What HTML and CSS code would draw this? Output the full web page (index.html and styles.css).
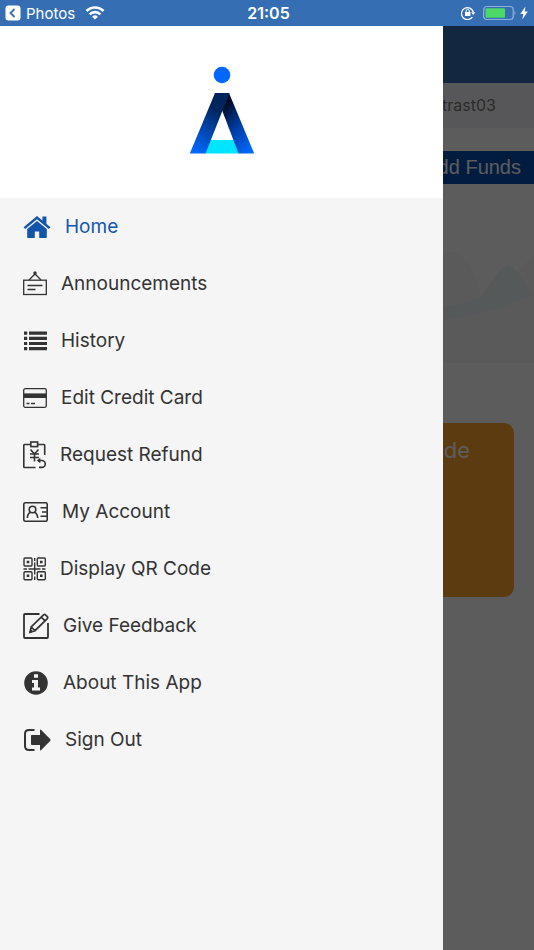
FILE: index.html
```html
<!DOCTYPE html>
<html lang="en">
<head>
    <meta charset="UTF-8">
    <meta name="viewport" content="width=device-width, initial-scale=1.0">
    <title>Home</title>
    <link rel="stylesheet" href="styles.css">
</head>
<body>
    <header class="status-bar">
        <div class="status-left">
            <a class="back-link" href="#">
                <svg width="16" height="16" viewBox="0 0 16 16"><rect x="0.5" y="0.5" width="15" height="15" rx="3" fill="#fff"/><path d="M9.500 4L5.500 8l4 4" fill="none" stroke="#366eb4" stroke-width="1.800"/></svg>
                Photos
            </a>
            <svg width="20" height="14" viewBox="0 0 20 14" fill="none" stroke="#fff" stroke-width="2.600">
                <path d="M1.500 5a12 12 0 0 1 17 0"/>
                <path d="M4.600 8.400a7.600 7.600 0 0 1 10.800 0"/>
                <path d="M10 13.600L7.100 10.800a4.100 4.100 0 0 1 5.800 0z" fill="#fff" stroke="none"/>
            </svg>
        </div>
        <div class="status-time">21:05</div>
        <div class="status-right">
            <svg width="16" height="14" viewBox="0 0 16 14" fill="none" stroke="#fff">
                <path d="M11.300 11.200A6 6 0 1 1 12.300 6" stroke-width="1.300"/>
                <path d="M10 6.200h4.400L12.200 9z" fill="#fff" stroke="none"/>
                <rect x="4" y="6" width="5.400" height="4" fill="#fff" stroke="none"/>
                <path d="M5.100 6.500V5a1.600 1.600 0 0 1 3.200 0v1.500"/>
            </svg>
            <svg width="34" height="16" viewBox="0 0 34 16">
                <rect x="0.700" y="1.500" width="29.500" height="13" rx="3" fill="none" stroke="#8fb0dc" stroke-width="1.200"/>
                <rect x="2.500" y="3.300" width="19.500" height="9.400" rx="1" fill="#4cd964"/>
                <path d="M31.500 5.500q2 2.500 0 5z" fill="#8fb0dc"/>
            </svg>
            <svg width="8" height="14" viewBox="0 0 8 14"><path d="M5.500 0.500L0.300 8h3L2.300 13.500 7.800 5.600H4.600z" fill="#fff"/></svg>
        </div>
    </header>

    <div class="screen">
        <main class="page">
            <div class="page-header"></div>
            <div class="user-row">contrast03</div>
            <button class="add-funds" type="button">Add Funds</button>
            <div class="waves">
                <svg width="100%" height="110" viewBox="0 0 534 110" preserveAspectRatio="xMaxYMid slice">
                    <path d="M0 60C150 60 300 60 420 15C445-3 462-5 475 25C480 40 483 47 486 51C500 36 515 24 534 4V110H0z" fill="#f8fafc"/>
                    <path d="M380 58C440 60 465 55 482 46C492 32 500 15 509 16C518 17 526 36 534 46V44C510 56 460 72 380 78z" fill="#ebf5f5"/>
                </svg>
            </div>
            <div class="code-card">Display QR Code</div>
        </main>
        <div class="backdrop"></div>

        <aside class="drawer">
            <div class="logo">
                <svg width="66" height="88" viewBox="0 0 66 88">
                    <defs>
                        <linearGradient id="leftLeg" x1="0.600" y1="0" x2="0.200" y2="1"><stop offset="0.200" stop-color="#00245c"/><stop offset="1" stop-color="#0068ff"/></linearGradient>
                        <linearGradient id="rightLeg" x1="0.200" y1="0" x2="0.800" y2="1"><stop offset="0.100" stop-color="#000a24"/><stop offset="0.500" stop-color="#003a9c"/><stop offset="1" stop-color="#0068ff"/></linearGradient>
                    </defs>
                    <circle cx="33" cy="9" r="8.300" fill="#0068ff"/>
                    <path d="M21 74h24l5 13.500H16z" fill="#00e5ff"/>
                    <path d="M40 27L65.200 87.500H49.500L33 44z" fill="url(#rightLeg)"/>
                    <path d="M26 27h14.500L16.500 87.500H0.800z" fill="url(#leftLeg)"/>
                </svg>
            </div>
            <nav class="menu">
                <a class="menu-item active" href="#">
                    <svg width="28" height="24" viewBox="0 0 28 24" fill="currentColor">
                        <path d="M14 1L0.600 12.200l1.600 1.800L14 4.300 25.800 14l1.600-1.800-4-3.400V1.600h-4v3.900z"/>
                        <path d="M14 6L4.200 14v8.200q0 .8.800.8h6.800v-6.500h4.400V23H23q.8 0 .8-.8V14z"/>
                    </svg>
                    Home
                </a>
                <a class="menu-item" href="#">
                    <svg width="24" height="26" viewBox="0 0 24 26" fill="none" stroke="currentColor" stroke-width="1.300">
                        <rect x="0.700" y="9.200" width="22.600" height="14.300"/>
                        <path d="M6 9l5.500-5.500h1L18 9M4.500 14.500h15M4.500 18.500h8"/>
                        <circle cx="12" cy="2" r="1.700" fill="currentColor" stroke="none"/>
                    </svg>
                    Announcements
                </a>
                <a class="menu-item" href="#">
                    <svg width="24" height="20" viewBox="0 0 24 20" fill="currentColor">
                        <path d="M1 0.500h3.200v3.200H1zM6 0.500h18v3.200H6zM1 5.700h3.200v3.200H1zM6 5.700h18v3.200H6zM1 10.900h3.200v3.200H1zM6 10.900h18v3.200H6zM1 16.100h3.200v3.200H1zM6 16.100h18v3.200H6z"/>
                    </svg>
                    History
                </a>
                <a class="menu-item" href="#">
                    <svg width="24" height="20" viewBox="0 0 24 20" fill="none" stroke="currentColor" stroke-width="1.300">
                        <rect x="0.700" y="0.700" width="22.600" height="18.600" rx="1.500"/>
                        <path d="M1 7.700h22" stroke-width="4.600"/>
                        <path d="M3.500 15.500h3M8 15.500h4"/>
                    </svg>
                    Edit Credit Card
                </a>
                <a class="menu-item" href="#">
                    <svg width="23" height="28" viewBox="0 0 23 28" fill="none" stroke="currentColor" stroke-width="1.600">
                        <path d="M7.500 3.500H1.500q-.7 0-.7.7v21.600q0 .7.700.7h11M15 3.500h6q.7 0 .7.700V14"/>
                        <rect x="7.800" y="1" width="6.800" height="4.600"/>
                        <path d="M7.500 8.500l4 4.500 4-4.500M11.500 13v7.500M7 13h9M7 16.500h9"/>
                        <path d="M15.500 19.500h3.300a3.400 3.400 0 0 1 0 6.900H16"/>
                        <path d="M17.300 16.700v5.600L13.700 19.500z" fill="currentColor" stroke="none"/>
                    </svg>
                    Request Refund
                </a>
                <a class="menu-item" href="#">
                    <svg width="25" height="20" viewBox="0 0 25 20" fill="none" stroke="currentColor" stroke-width="1.600">
                        <rect x="0.800" y="0.800" width="23.400" height="18.400" rx="1.500"/>
                        <circle cx="9.500" cy="7.500" r="3.300"/>
                        <path d="M4.300 16q.3-4.500 3.200-5.700M14.700 16q-.3-4.500-3.200-5.700M17.500 5.700H24M19 10h5M17.500 14.300H24"/>
                    </svg>
                    My Account
                </a>
                <a class="menu-item" href="#">
                    <svg width="23" height="24" viewBox="0 0 23 24" fill="none" stroke="currentColor" stroke-width="1.400">
                        <rect x="1" y="1" width="8" height="8" rx="1"/>
                        <rect x="14.300" y="1" width="8" height="8" rx="1"/>
                        <rect x="1" y="14.800" width="8" height="8" rx="1"/>
                        <rect x="14.300" y="14.800" width="8" height="8" rx="1"/>
                        <path d="M3.700 3.700h2.600v2.600H3.700zM17 3.700h2.600v2.600H17zM3.700 17.500h2.600v2.600H3.700zM17 17.500h2.600v2.600H17z" fill="currentColor" stroke="none"/>
                        <path d="M11.700 1v3M11.700 5.500v12M11.700 19.500V23M0.500 12H4M5.500 12h12M19 12h3.500"/>
                    </svg>
                    Display QR Code
                </a>
                <a class="menu-item" href="#">
                    <svg width="26" height="26" viewBox="0 0 26 26" fill="none" stroke="currentColor" stroke-width="1.800">
                        <path d="M16.500 1H2Q1 1 1 2v22q0 1 1 1h22q1 0 1-1V10"/>
                        <path d="M7 19.300l1.200-5.300L20.500 1.900q1-.9 2 0l1.800 1.700q.9 1 0 2L12 17.700zM18.300 4.200l3.700 3.600M8.200 14l3.800 3.700" stroke-width="1.700"/>
                        <path d="M6.300 20l1-4 3 2.800z" fill="currentColor" stroke="none"/>
                    </svg>
                    Give Feedback
                </a>
                <a class="menu-item" href="#">
                    <svg width="26" height="24" viewBox="0 0 26 24">
                        <circle cx="13" cy="12" r="11.800" fill="currentColor"/>
                        <path d="M11 3.300h4v3.500h-4zM9 9h6v7.500h2v3H9v-3h2V12H9z" fill="#f5f5f5"/>
                    </svg>
                    About This App
                </a>
                <a class="menu-item" href="#">
                    <svg width="28" height="24" viewBox="0 0 28 24">
                        <path d="M11.500 2H6Q2 2 2 6v12q0 4 4 4h5.500" fill="none" stroke="currentColor" stroke-width="2"/>
                        <path d="M8 8q0-.9.900-.9H17V2.200q0-1.200 1-.4l9.300 9.400q.7.800 0 1.600L18 22.200q-1 .8-1-.4v-4.900H8.900q-.9 0-.9-.9z" fill="currentColor"/>
                    </svg>
                    Sign Out
                </a>
            </nav>
        </aside>
    </div>
</body>
</html>
```
FILE: styles.css
```css
* {
    box-sizing: border-box;
}
body {
    margin: 0;
    min-height: 100vh;
    display: flex;
    flex-direction: column;
    font-family: Inter, "Liberation Sans", Arial, sans-serif;
    color: #333;
}
.status-bar {
    display: grid;
    grid-template-columns: 1fr auto 1fr;
    align-items: center;
    height: 26px;
    padding: 0 6px 0 5px;
    background-color: #366eb4;
    color: white;
    font-size: 15px;
}
.status-left,
.back-link,
.status-right {
    display: flex;
    align-items: center;
}
.status-left {
    gap: 10px;
}
.back-link {
    gap: 5px;
    color: white;
    text-decoration: none;
}
.status-time {
    padding-left: 4px;
    font-size: 16px;
    font-weight: 600;
}
.status-right {
    justify-content: flex-end;
    gap: 6px;
}
.status-right svg:last-child {
    margin-left: -3px;
}
.screen {
    position: relative;
    flex: 1;
    display: flex;
    overflow: hidden;
}
.page {
    flex: 1;
    display: flex;
    flex-direction: column;
    background-color: white;
    text-align: right;
}
.page-header {
    height: 57px;
    background-color: #366eb4;
}
.user-row {
    padding: 0 38px;
    background-color: #f2f2f5;
    color: #777;
    font-size: 16px;
    line-height: 45px;
}
.add-funds {
    margin: 23px 0 0;
    padding: 0 13px;
    border: none;
    background-color: #084eb2;
    color: white;
    font-family: "Liberation Sans", Arial, sans-serif;
    font-size: 20px;
    line-height: 33px;
    text-align: right;
}
.waves {
    display: flex;
    align-items: flex-end;
    height: 179px;
    margin-bottom: 60px;
    border-bottom: 3px solid #f7f7f7;
    background-color: #fff;
}
.code-card {
    height: 174px;
    margin: 0 20px;
    padding: 10px 44px;
    border-radius: 10px;
    background-color: #fda42c;
    color: white;
    font-size: 22px;
    line-height: 34px;
}
.backdrop {
    position: absolute;
    inset: 0;
    background-color: rgba(0, 0, 0, 0.64);
}
.drawer {
    position: absolute;
    top: 0;
    bottom: 0;
    left: 0;
    width: 83%;
    background-color: #f5f5f5;
}
.logo {
    display: flex;
    justify-content: center;
    padding: 40px 0 44px;
    background-color: white;
}
.menu {
    display: flex;
    flex-direction: column;
}
.menu-item {
    display: flex;
    align-items: center;
    gap: 14px;
    height: 57px;
    padding: 0 23px;
    color: #333;
    font-size: 19px;
    text-decoration: none;
}
.menu-item.active {
    color: #1455ac;
}
```
